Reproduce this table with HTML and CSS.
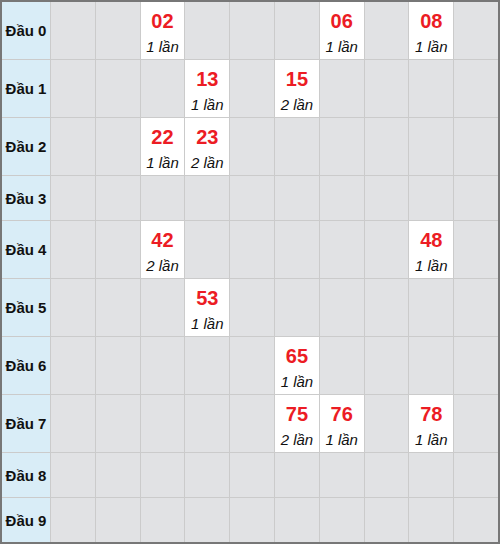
FILE: index.html
```html
<!DOCTYPE html>
<html lang="vi">
<head>
  <meta charset="UTF-8">
  <meta name="viewport" content="width=device-width, initial-scale=1.0">
  <title>Bảng đầu lô</title>
  <link rel="stylesheet" href="styles.css">
</head>
<body>
  <div id="board" class="board"></div>

  <script>
    // head digit -> { tail digit: times }
    const hits = {
      0: { 2: 1, 6: 1, 8: 1 },
      1: { 3: 1, 5: 2 },
      2: { 2: 1, 3: 2 },
      4: { 2: 2, 8: 1 },
      5: { 3: 1 },
      6: { 5: 1 },
      7: { 5: 2, 6: 1, 8: 1 }
    };

    const board = document.getElementById('board');

    for (let head = 0; head < 10; head++) {
      const label = document.createElement('div');
      label.className = 'head';
      label.textContent = 'Đầu ' + head;
      board.appendChild(label);

      const row = hits[head] || {};
      for (let tail = 0; tail < 10; tail++) {
        const cell = document.createElement('div');
        cell.className = 'cell';
        if (row[tail]) {
          cell.classList.add('hit');
          cell.innerHTML =
            '<span class="num">' + head + tail + '</span>' +
            '<span class="times">' + row[tail] + ' lần</span>';
        }
        board.appendChild(cell);
      }
    }
  </script>
</body>
</html>
```

FILE: styles.css
```css
/* Page */
body {
  margin: 0;
  font-family: "Liberation Sans", Arial, sans-serif;
  background: #fff;
}

/* Board: label column + ten tail columns */
.board {
  display: grid;
  grid-template-columns: 48px repeat(10, 1fr);
  gap: 1px;
  background: #cbcbcb;
  border: 2px solid #777;
  width: 500px;
  box-sizing: border-box;
}

.head {
  display: flex;
  align-items: center;
  justify-content: center;
  min-height: 44px;
  background: #d9edf7;
  color: #111;
  font-size: 15px;
  font-weight: bold;
  white-space: nowrap;
}

.cell { background: #e1e2e4; }

/* Cell with a hit */
.cell.hit {
  display: flex;
  flex-direction: column;
  align-items: center;
  padding: 4px 0 1px;
  background: #fff;
}

.num {
  line-height: 30px;
  font-size: 20px;
  font-weight: bold;
  color: #ec1c24;
}

.times {
  line-height: 22px;
  font-size: 15px;
  font-style: italic;
  color: #111;
}
```
